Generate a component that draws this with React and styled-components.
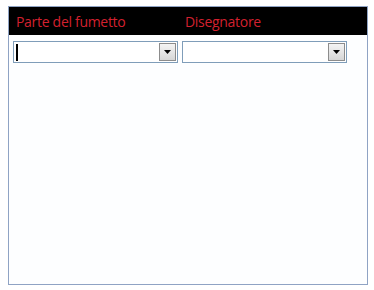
import styled, { createGlobalStyle } from 'styled-components';

const Global = createGlobalStyle`
  body {
    margin: 0;
    background: #ffffff;
    font-family: 'Open Sans', 'Liberation Sans', sans-serif;
  }
`;

const Frame = styled.div`
  margin: 6px 0 0 8px;
  width: 358px;
  height: 277px;
  border: 1px solid #8fa3c4;
  background: #fdfeff;
`;

const Header = styled.div`
  display: flex;
  height: 28px;
  align-items: center;
  background: #000000;
  padding-left: 7px;
`;

const Label = styled.span`
  width: ${p => p.width}px;
  color: #d3202f;
  font-size: 14px;
  font-family: 'Open Sans', 'Liberation Sans', sans-serif;
  letter-spacing: -0.3px;
`;

const Row = styled.div`
  display: flex;
  gap: 4px;
  padding: 6px 0 0 4px;
`;

const Combo = styled.div`
  display: flex;
  align-items: center;
  justify-content: space-between;
  box-sizing: border-box;
  width: 165px;
  height: 22px;
  border: 1px solid #7f9db9;
  background: #ffffff;
  padding: 1px;
`;

const Caret = styled.div`
  width: 2px;
  height: 17px;
  margin-left: 1px;
  background: ${p => (p.active ? '#000000' : 'transparent')};
`;

const DropButton = styled.div`
  display: flex;
  align-items: center;
  justify-content: center;
  box-sizing: border-box;
  width: 17px;
  height: 18px;
  border: 1px solid #8c8c8c;
  background: linear-gradient(#f4f4f4, #d6d6d6);
`;

const Arrow = () => (
  <svg width="7" height="4" viewBox="0 0 7 4">
    <polygon points="0,0 7,0 3.5,4" fill="#000" />
  </svg>
);

export default function App() {
  return (
    <>
      <Global />
      <Frame>
        <Header>
          <Label width={169}>Parte del fumetto</Label>
          <Label>Disegnatore</Label>
        </Header>
        <Row>
          <Combo>
            <Caret active />
            <DropButton>
              <Arrow />
            </DropButton>
          </Combo>
          <Combo>
            <Caret />
            <DropButton>
              <Arrow />
            </DropButton>
          </Combo>
        </Row>
      </Frame>
    </>
  );
}
